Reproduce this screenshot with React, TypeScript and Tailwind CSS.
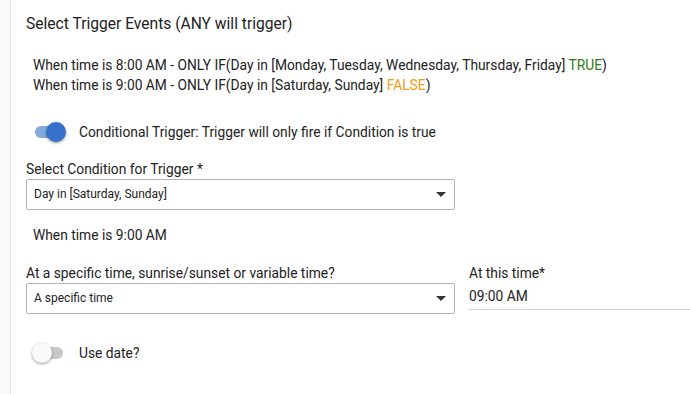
import React from "react";

function Toggle({ on }: { on: boolean }) {
  return (
    <div className="relative h-[20px] w-[32px] shrink-0">
      <div
        className={
          "absolute left-[2px] top-[4px] h-[12px] w-[28px] rounded-full " +
          (on ? "bg-[#84a9dc]" : "bg-[#c8c8c8]")
        }
      />
      <div
        className={
          "absolute top-0 h-[20px] w-[20px] rounded-full shadow-[0_1px_3px_rgba(0,0,0,0.4)] " +
          (on ? "left-[13px] bg-[#3672c9]" : "left-[-1px] bg-[#fafafa]")
        }
      />
    </div>
  );
}

function Select({ value }: { value: string }) {
  return (
    <div className="flex h-[31px] w-[429px] items-center justify-between rounded-[2px] border border-[#b4b4b4] pl-[7px] pr-[8px] text-[12px] text-[#222]">
      <span>{value}</span>
      <svg width="10" height="5" viewBox="0 0 10 5">
        <path d="M0 0h10L5 5z" fill="#333" />
      </svg>
    </div>
  );
}

export default function App() {
  return (
    <div
      className="flex h-[394px] w-[690px] overflow-hidden bg-white text-[13.8px] text-[#222]"
      style={{ fontFamily: "Roboto, 'Liberation Sans', sans-serif" }}
    >
      <div className="w-[11px] shrink-0 border-r border-[#e6e6e6] bg-[#f9f9f9]" />
      <div className="flex flex-1 flex-col pl-[15px]">
        <div className="pt-[13px] text-[15.6px] leading-[22px]">
          Select Trigger Events (ANY will trigger)
        </div>
        <div className="mt-[20px] pl-[7px] leading-[20px]">
          <div>
            When time is 8:00 AM - ONLY IF(Day in [Monday, Tuesday, Wednesday,
            Thursday, Friday] <span className="text-[#2e7d12]">TRUE</span>)
          </div>
          <div>
            When time is 9:00 AM - ONLY IF(Day in [Saturday, Sunday]{" "}
            <span className="text-[#f39c12]">FALSE</span>)
          </div>
        </div>
        <div className="mt-[27px] flex items-center gap-[14px] pl-[7px]">
          <Toggle on />
          <span>
            Conditional Trigger: Trigger will only fire if Condition is true
          </span>
        </div>
        <div className="mt-[17px] leading-[19px]">
          Select Condition for Trigger *
        </div>
        <Select value="Day in [Saturday, Sunday]" />
        <div className="mt-[15px] pl-[7px] leading-[20px]">
          When time is 9:00 AM
        </div>
        <div className="mt-[18px] flex gap-[14px]">
          <div className="flex flex-col">
            <div className="leading-[20px]">
              At a specific time, sunrise/sunset or variable time?
            </div>
            <Select value="A specific time" />
          </div>
          <div className="flex flex-1 flex-col">
            <div className="leading-[20px]">At this time*</div>
            <div className="h-[27px] border-b border-[#cfcfcf] pt-[3px]">
              09:00 AM
            </div>
          </div>
        </div>
        <div className="mt-[29px] flex items-center gap-[14px] pl-[7px]">
          <Toggle on={false} />
          <span>Use date?</span>
        </div>
      </div>
    </div>
  );
}
